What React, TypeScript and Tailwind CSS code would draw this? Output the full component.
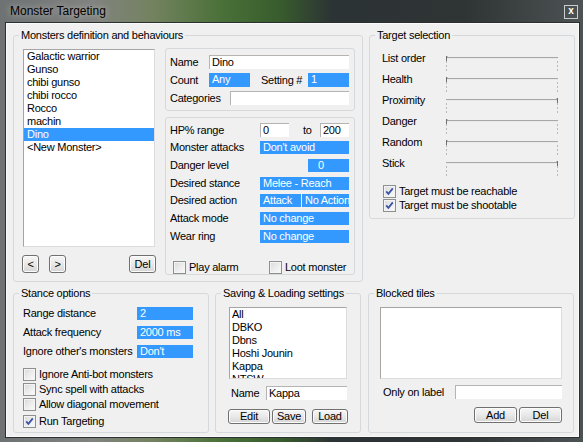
import type { ReactNode } from 'react'

// Small classic-Windows style widgets used by the targeting dialog

function Group({ title, className, children }: { title: string; className: string; children: ReactNode }) {
  return (
    <fieldset className={`border border-[#d5d9dc] rounded-[3px] ${className}`}>
      <legend className="ml-[5px] px-[2px] leading-[13px]">{title}</legend>
      {children}
    </fieldset>
  )
}

function Field({ value, className = '' }: { value?: string; className?: string }) {
  return (
    <div className={`h-[14px] bg-white border-t border-l border-[#b4b4b4] pl-[2px] leading-[13px] whitespace-nowrap overflow-hidden ${className}`}>
      {value}
    </div>
  )
}

function Pick({ value, className = '' }: { value: string; className?: string }) {
  return (
    <div className={`h-[13px] bg-[#3399ff] text-white pl-[3px] leading-[13px] whitespace-nowrap overflow-hidden ${className}`}>
      {value}
    </div>
  )
}

function Button({ label, className = '' }: { label: string; className?: string }) {
  return (
    <div
      className={`flex items-center justify-center border border-[#707070] rounded-[3px] bg-gradient-to-b from-[#f6f6f6] via-[#e9e9e9] to-[#d5d5d5] shadow-[inset_0_0_0_1px_#fcfcfc] leading-none ${className}`}
    >
      {label}
    </div>
  )
}

function Check({ on = false }: { on?: boolean }) {
  return (
    <span className="w-[13px] h-[13px] shrink-0 border border-[#8e8f8f] bg-gradient-to-br from-[#d9d9d9] via-[#ececec] to-[#fbfbfb] shadow-[inset_0_0_0_1px_#f4f4f4] flex items-center justify-center">
      {on && (
        <svg width="11" height="11" viewBox="0 0 11 11">
          <path d="M2.2 5.4 L4.4 7.9 L8.8 2.4" fill="none" stroke="#3b55a6" strokeWidth="1.8" />
        </svg>
      )}
    </span>
  )
}

function Option({ label, on, className = '' }: { label: string; on?: boolean; className?: string }) {
  return (
    <div className={`flex items-center h-[14px] gap-[3px] ${className}`}>
      <Check on={on} />
      <span className="whitespace-nowrap">{label}</span>
    </div>
  )
}

function Slider({ atEnd = false }: { atEnd?: boolean }) {
  const x = atEnd ? 113.5 : 2.5
  return (
    <svg width="116" height="21" className="block overflow-visible">
      <line x1="2" y1="9.5" x2="114" y2="9.5" stroke="#a7a7a7" />
      <line x1="2" y1="10.5" x2="114" y2="10.5" stroke="#e9e9e9" />
      <line x1="2.5" y1="13" x2="2.5" y2="23" stroke="#b9b9b9" strokeDasharray="2 2" />
      <line x1="113.5" y1="13" x2="113.5" y2="23" stroke="#b9b9b9" strokeDasharray="2 2" />
      <line x1={x} y1="8" x2={x} y2="13" stroke="#6f6f6f" />
      <line x1={atEnd ? x - 1 : x + 1} y1="8.5" x2={atEnd ? x - 1 : x + 1} y2="9.5" stroke="#9a9a9a" />
    </svg>
  )
}

const monsters = ['Galactic warrior', 'Gunso', 'chibi gunso', 'chibi rocco', 'Rocco', 'machin', 'Dino', '<New Monster>']
const profiles = ['All', 'DBKO', 'Dbns', 'Hoshi Jounin', 'Kappa', 'NTSW']
const weights: [string, boolean][] = [
  ['List order', false],
  ['Health', false],
  ['Proximity', true],
  ['Danger', false],
  ['Random', false],
  ['Stick', true],
]

function Row({ label, children, className = '' }: { label: string; children: ReactNode; className?: string }) {
  return (
    <div className={`flex items-center h-[14px] ${className}`}>
      <span className="w-[90px] whitespace-nowrap">{label}</span>
      {children}
    </div>
  )
}

export default function App() {
  return (
    <div className="w-[583px] h-[442px] flex flex-col bg-[linear-gradient(90deg,#6e7273_0%,#80837f_16%,#748260_26%,#4a7138_38%,#385c2d_48%,#2c3334_57%,#2f3435_80%,#4d5354_100%)] font-['Liberation_Sans',Arial,sans-serif] text-[11px] leading-[13px] tracking-[-0.25px] text-black select-none">
      <div className="h-[23px] shrink-0 flex items-center justify-between pl-[10px] pr-[5px]">
        <span className="text-[12px] tracking-normal [text-shadow:0_0_6px_rgba(255,255,255,0.6)]">Monster Targeting</span>
        <span className="w-[14px] h-[14px] border border-[#c8cdce] bg-[#4a5051] text-white text-[10px] font-bold flex items-center justify-center leading-none pb-[1px]">
          x
        </span>
      </div>

      <div className="ml-[6px] w-[573px] h-[414px] bg-[#f0f0f0] border border-[#fafafa] ring-1 ring-[#2a2f30] pl-[6px] pt-[5px]">
        <div className="flex items-start gap-[6px]">
          <Group title="Monsters definition and behaviours" className="w-[350px] h-[253px]">
            <div className="flex pl-[9px] pt-[7px]">
              <div className="w-[132px]">
                <div className="h-[198px] bg-white border border-[#a5a5a5] border-r-[#dcdcdc] border-b-[#dcdcdc] pl-[3px] overflow-hidden">
                  {monsters.map((m) => (
                    <div key={m} className={`h-[13px] -ml-[3px] pl-[3px] ${m === 'Dino' ? 'bg-[#3399ff] text-white' : ''}`}>
                      {m}
                    </div>
                  ))}
                </div>
                <div className="flex mt-[8px] -ml-[1px]">
                  <Button label="<" className="w-[17px] h-[18px]" />
                  <Button label=">" className="w-[17px] h-[18px] ml-[10px]" />
                  <Button label="Del" className="w-[27px] h-[18px] ml-auto -mr-[1px]" />
                </div>
              </div>

              <div className="ml-[10px] w-[190px] -mt-[1px]">
                <div className="h-[63px] border border-[#d5d9dc] rounded-[3px] pl-[4px] pt-[6px] flex flex-col gap-[4px]">
                  <div className="flex items-center">
                    <span className="w-[39px]">Name</span>
                    <Field value="Dino" className="w-[140px]" />
                  </div>
                  <div className="flex items-center h-[14px]">
                    <span className="w-[39px]">Count</span>
                    <Pick value="Any" className="w-[41px] h-[14px]" />
                    <span className="ml-[11px] w-[47px]">Setting #</span>
                    <Pick value="1" className="w-[41px] h-[14px]" />
                  </div>
                  <div className="flex items-center">
                    <span className="w-[60px]">Categories</span>
                    <Field className="w-[119px]" />
                  </div>
                </div>

                <div className="h-[158px] mt-[6px] border border-[#d5d9dc] rounded-[3px] pl-[4px] pt-[5px] flex flex-col gap-[4px]">
                  <Row label="HP% range">
                    <Field value="0" className="w-[29px]" />
                    <span className="w-[31px] pl-[14px]">to</span>
                    <Field value="200" className="w-[29px]" />
                  </Row>
                  <Row label="Monster attacks">
                    <Pick value="Don't avoid" className="w-[89px]" />
                  </Row>
                  <Row label="Danger level">
                    <Pick value="0" className="w-[41px] ml-[48px] pl-[10px]" />
                  </Row>
                  <Row label="Desired stance">
                    <Pick value="Melee - Reach" className="w-[89px]" />
                  </Row>
                  <Row label="Desired action">
                    <Pick value="Attack" className="w-[41px]" />
                    <Pick value="No Action" className="w-[47px] ml-[1px] pl-[2px]" />
                  </Row>
                  <Row label="Attack mode">
                    <Pick value="No change" className="w-[89px]" />
                  </Row>
                  <Row label="Wear ring">
                    <Pick value="No change" className="w-[89px]" />
                  </Row>
                  <div className="flex mt-[13px] ml-[3px]">
                    <Option label="Play alarm" className="w-[96px]" />
                    <Option label="Loot monster" />
                  </div>
                </div>
              </div>
            </div>
          </Group>

          <Group title="Target selection" className="w-[206px] h-[190px]">
            <div className="pl-[12px] pt-[6px]">
              {weights.map(([name, atEnd]) => (
                <div key={name} className="flex items-center h-[21px]">
                  <span className="w-[62px]">{name}</span>
                  <Slider atEnd={atEnd} />
                </div>
              ))}
              <Option label="Target must be reachable" on className="mt-[10px] ml-[1px]" />
              <Option label="Target must be shootable" on className="ml-[1px]" />
            </div>
          </Group>
        </div>

        <div className="flex items-start mt-[5px]">
          <Group title="Stance options" className="w-[196px] h-[146px]">
            <div className="pl-[9px] pt-[7px] flex flex-col">
              <div className="flex items-center h-[13px]">
                <span className="w-[114px]">Range distance</span>
                <Pick value="2" className="w-[56px]" />
              </div>
              <div className="flex items-center h-[13px] mt-[6px]">
                <span className="w-[114px]">Attack frequency</span>
                <Pick value="2000 ms" className="w-[56px]" />
              </div>
              <div className="flex items-center h-[13px] mt-[6px]">
                <span className="w-[114px] whitespace-nowrap">Ignore other's monsters</span>
                <Pick value="Don't" className="w-[56px]" />
              </div>
              <Option label="Ignore Anti-bot monsters" className="mt-[9px]" />
              <Option label="Sync spell with attacks" className="mt-[1px]" />
              <Option label="Allow diagonal movement" className="mt-[1px]" />
              <Option label="Run Targeting" on className="mt-[3px]" />
            </div>
          </Group>

          <Group title="Saving & Loading settings" className="w-[146px] h-[146px] ml-[6px]">
            <div className="pl-[13px] pt-[7px]">
              <div className="w-[118px] h-[72px] bg-white border border-[#a5a5a5] border-r-[#dcdcdc] border-b-[#dcdcdc] pl-[2px] overflow-hidden">
                {profiles.map((p) => (
                  <div key={p} className="h-[13px]">
                    {p}
                  </div>
                ))}
              </div>
              <div className="flex items-center mt-[7px] ml-[2px]">
                <span className="w-[35px]">Name</span>
                <Field value="Kappa" className="w-[81px]" />
              </div>
              <div className="flex mt-[9px] -ml-[1px]">
                <Button label="Edit" className="w-[42px] h-[15px]" />
                <Button label="Save" className="w-[34px] h-[15px] ml-[2px]" />
                <Button label="Load" className="w-[36px] h-[15px] ml-[6px]" />
              </div>
            </div>
          </Group>

          <Group title="Blocked tiles" className="w-[206px] h-[146px] ml-[7px]">
            <div className="pl-[11px] pt-[7px]">
              <div className="w-[182px] h-[72px] bg-white border border-[#a5a5a5] border-r-[#dcdcdc] border-b-[#dcdcdc]" />
              <div className="flex items-center mt-[6px] ml-[3px]">
                <span className="w-[72px]">Only on label</span>
                <Field className="w-[107px]" />
              </div>
              <div className="flex justify-end w-[182px] mt-[8px]">
                <Button label="Add" className="w-[43px] h-[16px]" />
                <Button label="Del" className="w-[43px] h-[16px] ml-[2px]" />
              </div>
            </div>
          </Group>
        </div>
      </div>
    </div>
  )
}
